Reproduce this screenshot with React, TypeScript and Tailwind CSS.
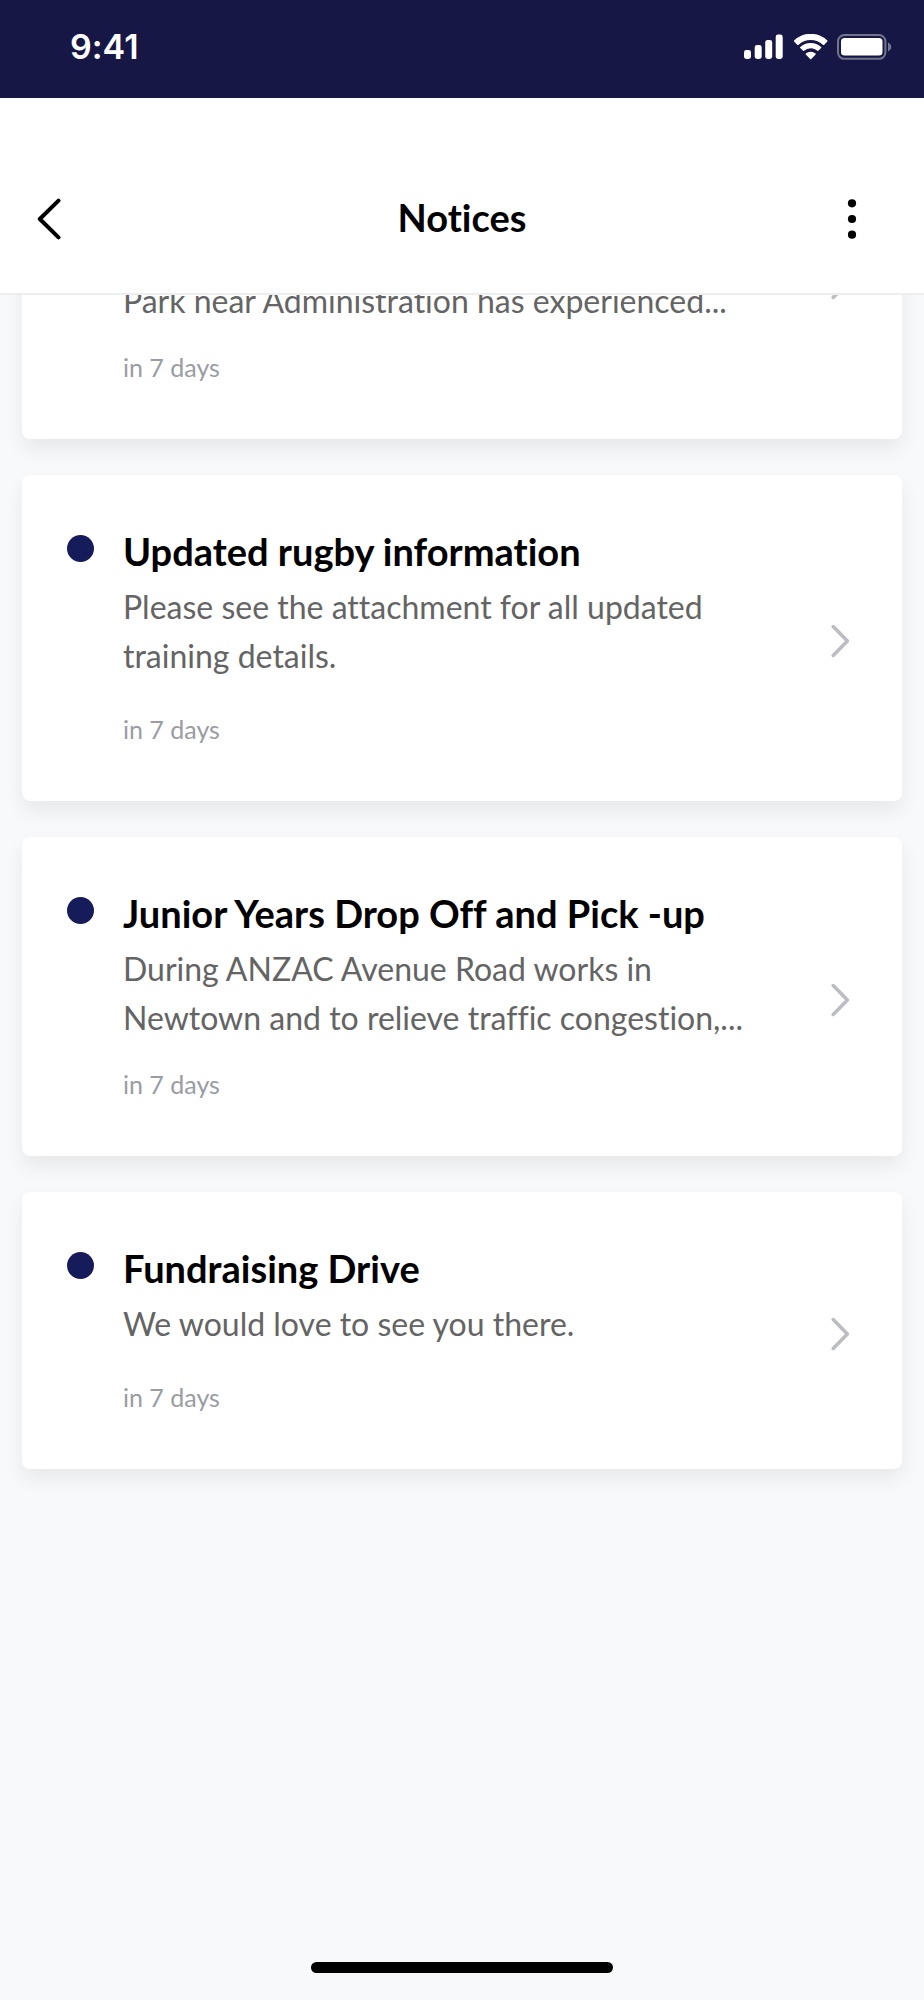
type Notice = {
  title: string;
  lines: string[];
  date: string;
  truncated?: boolean;
};

const notices: Notice[] = [
  {
    title: "",
    lines: ["", "Park near Administration has experienced..."],
    date: "in 7 days",
    truncated: true,
  },
  {
    title: "Updated rugby information",
    lines: ["Please see the attachment for all updated", "training details."],
    date: "in 7 days",
  },
  {
    title: "Junior Years Drop Off and Pick -up",
    lines: ["During ANZAC Avenue Road works in", "Newtown and to relieve traffic congestion,..."],
    date: "in 7 days",
    truncated: true,
  },
  {
    title: "Fundraising Drive",
    lines: ["We would love to see you there."],
    date: "in 7 days",
  },
];

function StatusIcons() {
  return (
    <svg width="148" height="26" viewBox="0 0 148 26" fill="none" aria-hidden="true">
      <g fill="#fff">
        <rect x="0" y="16" width="7" height="9" rx="2.4" />
        <rect x="10.7" y="11" width="7" height="14" rx="2.4" />
        <rect x="21.2" y="6" width="7" height="19" rx="2.4" />
        <rect x="31.7" y="0.6" width="7" height="24.4" rx="2.4" />
        <path d="M66.7 5.5c4.6 0 9 1.8 12.4 5 .3.3.6.2.9 0l3.3-3.300q.6-.6 0-1.100a23.800 23.800 0 0 0-33.200 0q-.6.500 0 1.100l3.300 3.300c.3.2.6.3.9 0a18 18 0 0 1 12.400-5z" transform="translate(0 .4)" />
        <path d="M66.700 14.200c2.500 0 4.900.9 6.700 2.600.3.300.6.300.9 0l2.800-2.700c.4-.4.4-.7 0-1.100a15.200 15.200 0 0 0-20.800 0c-.4.400-.4.700 0 1.100l2.800 2.700c.3.300.6.300.9 0a9.900 9.900 0 0 1 6.700-2.600z" />
        <path d="M66.700 25.200c.3 0 .4-.1.600-.3l4.300-4.300c.4-.4.400-.7 0-1a7.600 7.600 0 0 0-9.800 0c-.4.300-.4.600 0 1l4.300 4.300c.2.200.3.300.6.300z" />
        <rect x="97" y="4" width="41.500" height="17.600" rx="3.600" />
      </g>
      <rect x="94" y="1" width="47.400" height="23.800" rx="6.400" stroke="#72768c" strokeWidth="2" />
      <path d="M144 8.600c2 .9 3.300 2.400 3.300 4.400s-1.300 3.500-3.300 4.400z" fill="#72768c" />
    </svg>
  );
}

function NoticeCard({ notice }: { notice: Notice }) {
  return (
    <li className="flex items-center rounded-lg bg-white pt-[50px] pr-[52px] pb-11 pl-[45px] shadow-[0_10px_20px_rgba(0,0,0,0.07)]">
      <span className="mt-[10px] size-[27px] shrink-0 self-start rounded-full bg-[#161b5a]" />
      <div className="ml-[29px] min-w-0 flex-1">
        <h2 className="min-h-[52px] text-[38px] leading-[52px] font-bold text-black">{notice.title}</h2>
        <p className="mt-[5px] text-[32px] leading-[49px] text-[#646464]">
          {notice.lines.map((line, i) => (
            <span key={i} className="block min-h-[49px] whitespace-nowrap">
              {line}
            </span>
          ))}
        </p>
        <p className={`${notice.truncated ? "mt-[15px]" : "mt-[22px]"} text-[25px] leading-[55px] text-[#999ca3]`}>
          {notice.date}
        </p>
      </div>
      <svg className="shrink-0" width="20" height="34" viewBox="0 0 20 34" fill="none" aria-hidden="true">
        <path d="M3.200 2.600 17.400 17 3.200 31.400" stroke="#bbbdc3" strokeWidth="3.600" strokeLinecap="round" strokeLinejoin="round" />
      </svg>
    </li>
  );
}

export default function App() {
  return (
    <div className="flex min-h-screen flex-col bg-[#f7f9fb] font-['Lato','Open_Sans',sans-serif] [font-variant-ligatures:none]">
      <div className="flex h-[98px] items-center justify-between bg-[#171746] pr-8 pb-1 pl-[70px]">
        <time className="font-['Inter',sans-serif] text-[34px] leading-10 font-semibold text-white">9:41</time>
        <StatusIcons />
      </div>

      <header className="relative z-10 grid grid-cols-[1fr_auto_1fr] items-center border-b-2 border-[#eceeef] bg-white px-6 pt-[88px] pb-[43px]">
        <button type="button" aria-label="Back" className="flex size-16 items-center justify-start pt-px pl-3">
          <svg width="26" height="42" viewBox="0 0 26 42" fill="none" aria-hidden="true">
            <path d="M22.500 2.600 3.800 21 22.500 39.400" stroke="#000" strokeWidth="4" strokeLinecap="round" strokeLinejoin="round" />
          </svg>
        </button>
        <h1 className="pb-0.5 text-[38px] leading-[52px] font-bold text-black">Notices</h1>
        <button type="button" aria-label="More options" className="mr-4 flex size-16 items-center justify-center justify-self-end pt-px">
          <svg width="10" height="42" viewBox="0 0 10 42" aria-hidden="true">
            <circle cx="5" cy="5.300" r="4.100" />
            <circle cx="5" cy="21" r="4.100" />
            <circle cx="5" cy="36.700" r="4.100" />
          </svg>
        </button>
      </header>

      <main className="flex-1 overflow-hidden px-[22px] pb-10">
        <ul className="-mt-[175px] flex flex-col gap-9">
          {notices.map((notice, i) => (
            <NoticeCard key={i} notice={notice} />
          ))}
        </ul>
      </main>

      <div className="flex justify-center pb-[27px]">
        <div className="h-[11px] w-[302px] rounded-full bg-black" />
      </div>
    </div>
  );
}
